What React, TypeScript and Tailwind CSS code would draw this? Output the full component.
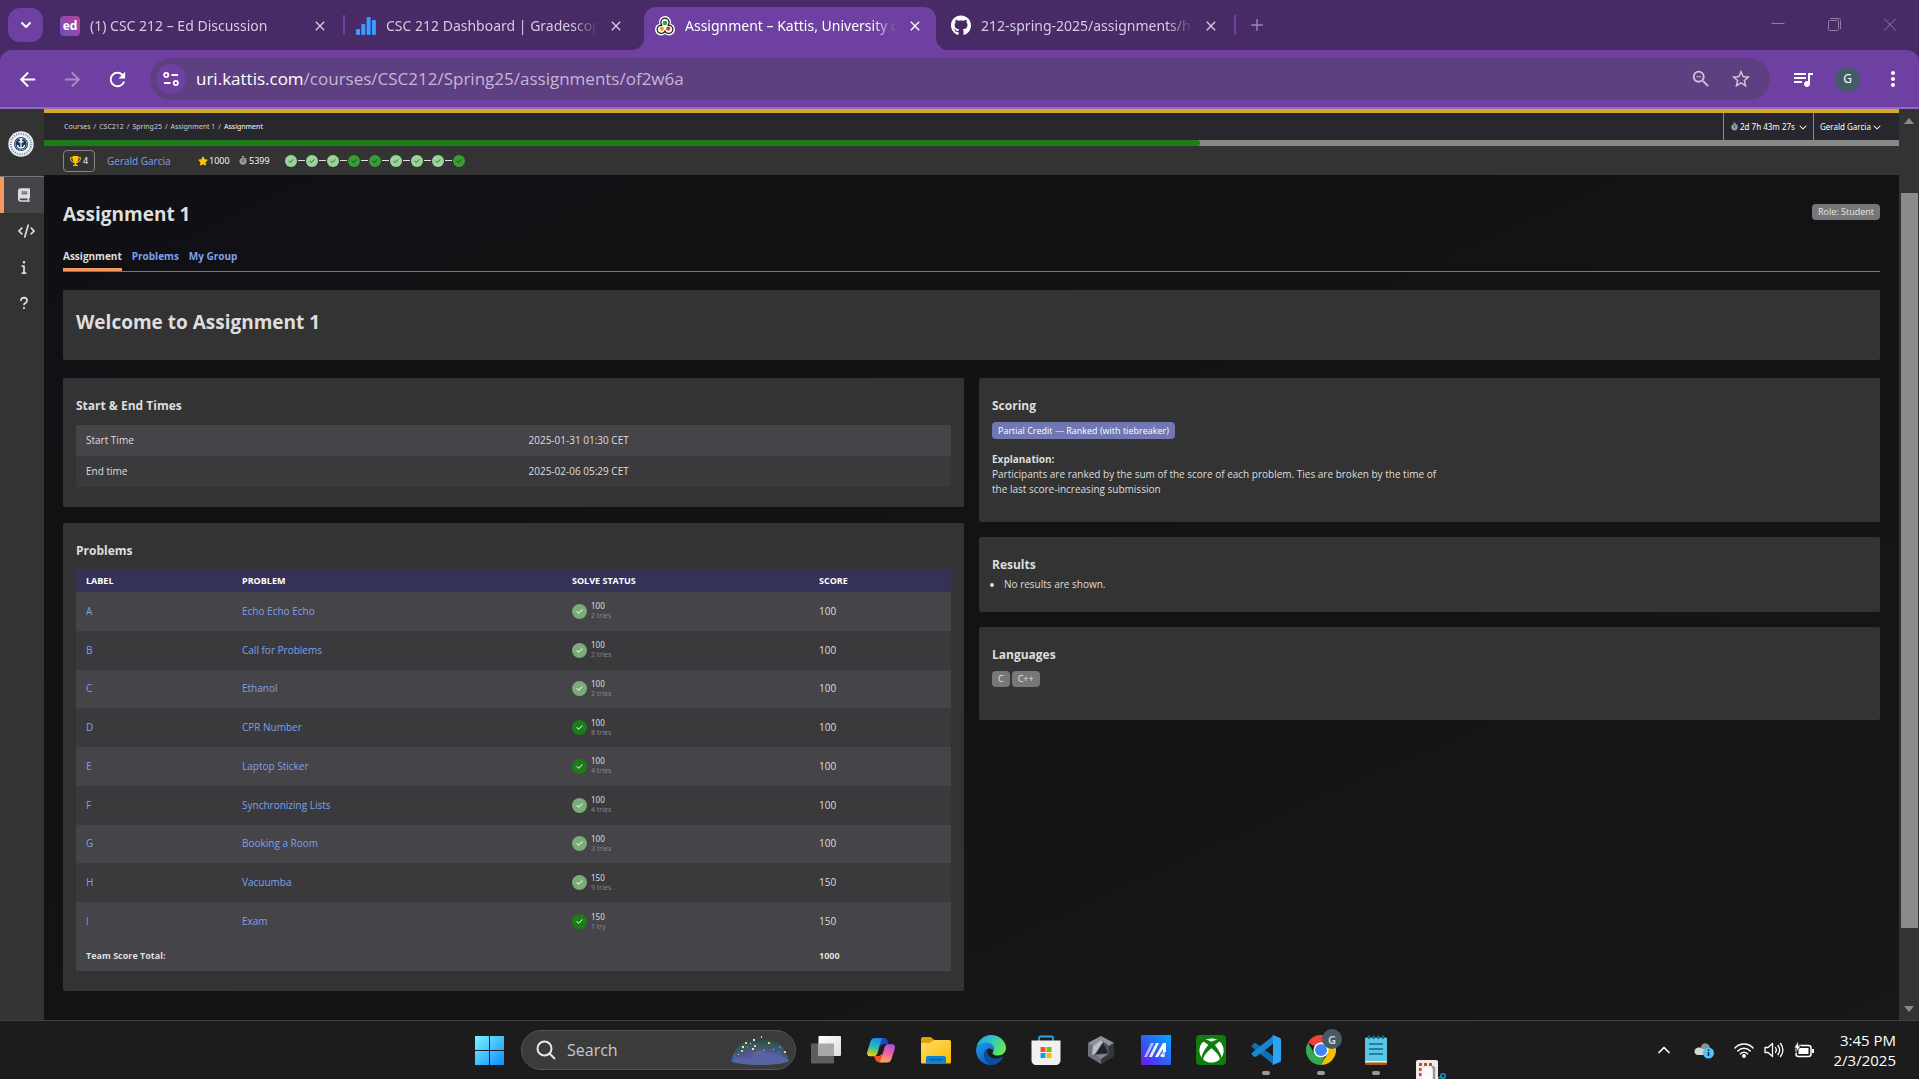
import React from "react";
import {
  FaBook,
  FaCheck,
  FaChevronDown,
  FaCode,
  FaGithub,
  FaInfo,
  FaQuestion,
  FaStar,
  FaStopwatch,
  FaTrophy,
  FaXbox,
} from "react-icons/fa6";
import {
  MdArrowBack,
  MdArrowForward,
  MdClose,
  MdMoreVert,
  MdQueueMusic,
  MdRefresh,
  MdStarBorder,
  MdZoomOut,
} from "react-icons/md";
import { ChevronDown, ChevronUp, Plus } from "lucide-react";

/* ---------- Browser chrome ---------- */

const EdIcon = () => (
  <span className="flex h-5 w-5 shrink-0 items-center justify-center rounded-sm bg-linear-to-tr from-[#6a4bc0] to-[#b6409b] font-['Open_Sans',sans-serif] text-xs font-bold text-white">
    ed
  </span>
);

const GradescopeIcon = () => (
  <svg viewBox="0 0 20 20" className="h-5 w-5 shrink-0 fill-[#3b9bff]">
    <rect x="0" y="13" width="4" height="6" rx="1" />
    <rect x="5.300" y="8" width="4" height="11" rx="1" />
    <rect x="10.600" y="1" width="4" height="18" rx="1" />
    <rect x="15.900" y="4" width="4" height="15" rx="1" />
  </svg>
);

const KattisIcon = () => (
  <svg viewBox="0 0 20 20" className="h-5 w-5 shrink-0">
    <g fill="#fff">
      <circle cx="10" cy="6" r="6" />
      <circle cx="6" cy="13.500" r="6" />
      <circle cx="14" cy="13.500" r="6" />
    </g>
    <g fill="#2b2b2b">
      <circle cx="10" cy="6.300" r="4.800" />
      <circle cx="6.300" cy="13.300" r="4.800" />
      <circle cx="13.700" cy="13.300" r="4.800" />
    </g>
    <g fill="#fff">
      <circle cx="10" cy="6.300" r="3.400" />
      <circle cx="6.300" cy="13.300" r="3.400" />
      <circle cx="13.700" cy="13.300" r="3.400" />
      <circle cx="10" cy="11" r="3" />
    </g>
    <circle cx="10" cy="7" r="2.200" fill="#2f9e44" />
    <circle cx="6.800" cy="12.600" r="2.200" fill="#f5a623" />
    <circle cx="13.200" cy="12.600" r="2.200" fill="#e0402f" />
  </svg>
);

type TabProps = {
  icon: React.ReactNode;
  title: string;
  active?: boolean;
};

function BrowserTab({ icon, title, active }: TabProps) {
  return (
    <div
      className={
        active
          ? "relative mt-[7px] flex h-[43px] w-[292px] items-center rounded-t-xl bg-[#6e40a1] pr-[13px] pb-1.5 pl-[11px] text-white"
          : "mt-[7px] flex h-[43px] w-[294px] items-center pr-[15px] pb-1.5 pl-[11px] text-[#d6cbe1]"
      }
    >
      {active && (
        <>
          <span className="absolute bottom-0 -left-3 h-3 w-3 bg-[radial-gradient(circle_at_0_0,transparent_12px,#6e40a1_12px)]" />
          <span className="absolute -right-3 bottom-0 h-3 w-3 bg-[radial-gradient(circle_at_100%_0,transparent_12px,#6e40a1_12px)]" />
        </>
      )}
      {icon}
      <span className="ml-2.5 flex-1 overflow-hidden [mask-image:linear-gradient(to_right,#000_88%,transparent)] text-[14px] leading-5 whitespace-nowrap">
        {title}
      </span>
      <button type="button" aria-label={"Close " + title} className="ml-2.5">
        <MdClose className="h-4 w-4" />
      </button>
    </div>
  );
}

const TabRule = () => <span className="mt-[15px] h-5 w-0.5 shrink-0 bg-[#6e40a1]" />;

function TabStrip() {
  return (
    <div className="flex h-[50px] shrink-0 bg-[#472a66]">
      <button
        type="button"
        aria-label="Search tabs"
        className="mt-2 ml-2 flex h-[34px] w-[35px] shrink-0 items-center justify-center rounded-xl bg-[#6e40a1] text-white"
      >
        <ChevronDown className="h-4 w-4" strokeWidth={3} />
      </button>
      <div className="ml-1.5 flex">
        <BrowserTab icon={<EdIcon />} title="(1) CSC 212 – Ed Discussion" />
        <TabRule />
        <BrowserTab icon={<GradescopeIcon />} title="CSC 212 Dashboard | Gradescop" />
        <div className="w-[5px]" />
        <BrowserTab icon={<KattisIcon />} title="Assignment – Kattis, University o" active />
        <div className="w-1" />
        <BrowserTab
          icon={<FaGithub className="h-[21px] w-5 shrink-0 text-white" />}
          title="212-spring-2025/assignments/h"
        />
        <TabRule />
        <button type="button" aria-label="New tab" className="ml-3 flex h-[50px] items-center text-[#9a86ad]">
          <Plus className="h-[18px] w-[18px]" />
        </button>
      </div>
      <div className="mt-[17px] mr-[21px] ml-auto flex gap-10 text-[#8f7da4]">
        <button type="button" aria-label="Minimize" className="h-4 w-4">
          <svg viewBox="0 0 16 16" className="h-4 w-4" stroke="currentColor" fill="none">
            <path d="M1.500 6.500h13" />
          </svg>
        </button>
        <button type="button" aria-label="Restore" className="h-4 w-4">
          <svg viewBox="0 0 16 16" className="h-4 w-4" stroke="currentColor" fill="none">
            <path d="M4 1.500h8.500a2 2 0 0 1 2 2V12" />
            <rect x="2.500" y="3.500" width="10" height="10" rx="1" />
          </svg>
        </button>
        <button type="button" aria-label="Close window" className="h-4 w-4">
          <svg viewBox="0 0 16 16" className="h-4 w-4" stroke="currentColor" fill="none">
            <path d="M2 1.500l12 12M14 1.500l-12 12" />
          </svg>
        </button>
      </div>
    </div>
  );
}

function Toolbar() {
  return (
    <div className="shrink-0 bg-[#472a66]">
      <div className="flex h-[59px] items-start rounded-t-xl border-b-2 border-[#9069bd] bg-[#6e40a1] pt-2 pr-3.5 text-white">
        <div className="flex h-[42px] items-center gap-[22px] pl-4">
          <button type="button" aria-label="Back">
            <MdArrowBack className="h-[23px] w-[23px]" />
          </button>
          <button type="button" aria-label="Forward" className="text-[#a68cc4]">
            <MdArrowForward className="h-[23px] w-[23px]" />
          </button>
          <button type="button" aria-label="Reload">
            <MdRefresh className="h-[23px] w-[23px]" />
          </button>
        </div>
        <div className="ml-[21px] flex h-[42px] flex-1 items-center rounded-full bg-[#5e3f81] pl-1.5">
          <button
            type="button"
            aria-label="View site information"
            className="flex h-[30px] w-[30px] items-center justify-center rounded-full bg-[#6e40a1]"
          >
            <svg viewBox="0 0 16 16" className="h-4 w-4" fill="none" stroke="#fff" strokeWidth="1.800">
              <circle cx="3.200" cy="4" r="2.100" />
              <path d="M8.500 4H15M1 12h6.500" />
              <circle cx="12.800" cy="12" r="2.100" />
            </svg>
          </button>
          <div className="ml-2.5 flex-1 font-['Open_Sans',sans-serif] text-[17px] leading-6 text-[#c6b6d6]">
            <span className="text-white">uri.kattis.com</span>/courses/CSC212/Spring25/assignments/of2w6a
          </div>
          <div className="flex items-center gap-[18px] pr-[18px] text-[#cfc5d8]">
            <button type="button" aria-label="Zoom">
              <MdZoomOut className="h-[22px] w-[22px]" />
            </button>
            <button type="button" aria-label="Bookmark this tab">
              <MdStarBorder className="h-[22px] w-[22px]" />
            </button>
          </div>
        </div>
        <div className="ml-[21px] flex h-[42px] items-center">
          <button type="button" aria-label="Media controls">
            <MdQueueMusic className="h-6 w-6" />
          </button>
          <button
            type="button"
            aria-label="Profile"
            className="ml-5 flex h-[25px] w-[25px] items-center justify-center rounded-full bg-[#455a64] text-xs text-white"
          >
            G
          </button>
          <button type="button" aria-label="Menu" className="ml-[21px]">
            <MdMoreVert className="h-6 w-6" />
          </button>
        </div>
      </div>
    </div>
  );
}

/* ---------- Site ---------- */

const Seal = () => (
  <svg viewBox="0 0 26 26" className="h-[26px] w-[26px]">
    <circle cx="13" cy="13" r="12.700" fill="#eef1f4" />
    <circle cx="13" cy="13" r="10.300" fill="none" stroke="#71839a" strokeWidth="2" strokeDasharray="1 1.400" />
    <circle cx="13" cy="13" r="7.800" fill="#fff" />
    <circle cx="13" cy="13" r="7" fill="#16355c" />
    <circle cx="13" cy="13" r="5.800" fill="none" stroke="#b8c4d2" strokeWidth="0.700" />
    <g fill="none" stroke="#fff" strokeWidth="1.200">
      <path d="M13 9v8M10.500 10.800h5M9.300 14c.5 2 2 3 3.700 3s3.200-1 3.700-3" />
      <circle cx="13" cy="8.600" r="0.900" />
    </g>
  </svg>
);

function Sidebar() {
  const item = "flex h-9 items-center pl-[18px] text-[#dcdcdc]";
  return (
    <nav aria-label="Main" className="w-11 shrink-0 bg-[#333333]">
      <div className="flex h-[68px] items-center border-b border-[#77777a] pt-[3px] pl-2">
        <Seal />
      </div>
      <a
        href="#courses"
        aria-label="Courses"
        className="flex h-9 items-center border-l-4 border-[#f8985f] bg-[#454449] pl-3.5 text-[#dcdcdc]"
      >
        <FaBook className="h-3.5 w-3" />
      </a>
      <a href="#code" aria-label="Code" className={item}>
        <FaCode className="h-3.5 w-[17px]" />
      </a>
      <a href="#info" aria-label="Information" className={item}>
        <FaInfo className="h-3.5 w-3" />
      </a>
      <a href="#help" aria-label="Help" className={item}>
        <FaQuestion className="h-3.5 w-3" />
      </a>
    </nav>
  );
}

const crumbs = ["Courses", "CSC212", "Spring25", "Assignment 1"];
const solved = [false, false, false, true, true, false, false, false, true];

function SiteHeader() {
  return (
    <header>
      <div className="flex h-[31px] border-t-4 border-[#d4a929] bg-[#28272d] font-['Noto_Sans',sans-serif] text-[8px] leading-3 text-[#e6e6e6]">
        <nav aria-label="Breadcrumb" className="flex items-center gap-[3px] pl-5 text-[7px] text-[#cfcfcf]">
          {crumbs.map((c) => (
            <React.Fragment key={c}>
              <a href="#crumb">{c}</a>
              <span>/</span>
            </React.Fragment>
          ))}
          <span className="text-white">Assignment</span>
        </nav>
        <button
          type="button"
          className="ml-auto flex w-[90px] items-center border-l border-[#8a8a8a] pl-[7px] whitespace-nowrap text-white"
        >
          <FaStopwatch className="mr-0.5 h-[9px] w-[7px] text-[#999]" />
          2d 7h 43m 27s
          <FaChevronDown className="mr-1.5 ml-auto h-2 w-2" />
        </button>
        <button
          type="button"
          className="flex w-[86px] items-center border-l border-[#8a8a8a] pl-1.5 whitespace-nowrap text-white"
        >
          Gerald Garcia
          <FaChevronDown className="mr-[18px] ml-auto h-2 w-2" />
        </button>
      </div>
      <div className="h-1.5 bg-[#888886]">
        <div className="h-1.5 w-[62.3%] rounded-r-sm bg-[#1b7c18]" />
      </div>
      <div className="flex h-[29px] items-center bg-[#333333] pl-[19px] text-[9px] leading-3 text-white">
        <span className="flex h-[22px] w-8 items-center justify-center gap-0.5 rounded-sm border border-[#858585]">
          <FaTrophy className="h-2.5 w-[11px] text-[#ffc400]" />4
        </span>
        <a href="#profile" className="ml-3 w-[61px] text-[10px] whitespace-nowrap text-[#7ba1ee]">
          Gerald Garcia
        </a>
        <span className="ml-[30px] flex w-[41px] items-center gap-px">
          <FaStar className="h-2.5 w-2.5 text-[#ffc400]" />
          1000
        </span>
        <span className="flex w-[46px] items-center gap-0.5">
          <FaStopwatch className="h-[9px] w-2 text-[#999]" />
          5399
        </span>
        <span className="flex items-center">
          {solved.map((first, i) => (
            <React.Fragment key={i}>
              {i > 0 && <span className="mx-px h-px w-[7px] bg-[#dddddd]" />}
              <span
                className={
                  first
                    ? "flex h-3 w-3 items-center justify-center rounded-full bg-[#379d34] text-[#1d4c1b]"
                    : "flex h-3 w-3 items-center justify-center rounded-full bg-[#9bd39a] text-[#2f6b2e]"
                }
              >
                <FaCheck className="h-1.5 w-1.5" />
              </span>
            </React.Fragment>
          ))}
        </span>
      </div>
    </header>
  );
}

const Card = ({ className = "", children }: { className?: string; children: React.ReactNode }) => (
  <section className={"rounded-xs bg-[#333333] px-[13px] pt-[18px] " + className}>{children}</section>
);

const CardTitle = ({ children }: { children: React.ReactNode }) => (
  <h3 className="text-[12px] leading-5 font-bold">{children}</h3>
);

const Tag = ({ children }: { children: React.ReactNode }) => (
  <span className="flex h-4 items-center rounded-sm bg-[#777777] px-1.5 text-[9px] leading-3 text-[#e6e6e6]">
    {children}
  </span>
);

const problems = [
  { label: "A", name: "Echo Echo Echo", score: 100, tries: "2 tries", first: false },
  { label: "B", name: "Call for Problems", score: 100, tries: "2 tries", first: false },
  { label: "C", name: "Ethanol", score: 100, tries: "2 tries", first: false },
  { label: "D", name: "CPR Number", score: 100, tries: "8 tries", first: true },
  { label: "E", name: "Laptop Sticker", score: 100, tries: "4 tries", first: true },
  { label: "F", name: "Synchronizing Lists", score: 100, tries: "4 tries", first: false },
  { label: "G", name: "Booking a Room", score: 100, tries: "3 tries", first: false },
  { label: "H", name: "Vacuumba", score: 150, tries: "9 tries", first: false },
  { label: "I", name: "Exam", score: 150, tries: "1 try", first: true },
];

function TimesTable() {
  return (
    <table className="mt-[9px] w-full table-fixed text-left">
      <tbody>
        <tr className="h-[31px] bg-[#454449]">
          <th className="pl-2.5 font-normal">Start Time</th>
          <td className="pl-[15px]">2025-01-31 01:30 CET</td>
        </tr>
        <tr className="h-[31px] bg-[#3a3a3c]">
          <th className="pl-2.5 font-normal">End time</th>
          <td className="pl-[15px]">2025-02-06 05:29 CET</td>
        </tr>
      </tbody>
    </table>
  );
}

function ProblemsTable() {
  return (
    <table className="mt-2 h-[402px] w-full table-fixed text-left">
      <colgroup>
        <col className="w-[156px]" />
        <col className="w-[330px]" />
        <col className="w-[247px]" />
        <col className="w-[142px]" />
      </colgroup>
      <thead>
        <tr className="h-[23px] bg-[#353258] text-[9px] text-white uppercase">
          <th className="pl-2.5">Label</th>
          <th className="pl-2.5">Problem</th>
          <th className="pl-2.5">Solve status</th>
          <th className="pl-2.5">Score</th>
        </tr>
      </thead>
      <tbody>
        {problems.map((p) => (
          <tr key={p.label} className="bg-[#3a3a3c] odd:bg-[#454449]">
            <td className="pl-2.5">
              <a href="#problem" className="text-[#7ba1ee]">
                {p.label}
              </a>
            </td>
            <td className="pl-2.5">
              <a href="#problem" className="text-[#7ba1ee]">
                {p.name}
              </a>
            </td>
            <td className="pl-2.5">
              <div className="flex items-center gap-1">
                <span
                  className={
                    p.first
                      ? "flex h-[15px] w-[15px] items-center justify-center rounded-full bg-[#1b7c18]"
                      : "flex h-[15px] w-[15px] items-center justify-center rounded-full bg-[#7bab79]"
                  }
                >
                  <FaCheck className="h-[7px] w-[7px] text-white" />
                </span>
                <span className="flex flex-col font-['Noto_Sans',sans-serif]">
                  <span className="text-[8px] leading-[10px]">{p.score}</span>
                  <span className="text-[7px] leading-[10px] text-[#858585]">{p.tries}</span>
                </span>
              </div>
            </td>
            <td className="pl-2.5">{p.score}</td>
          </tr>
        ))}
      </tbody>
      <tfoot>
        <tr className="h-[30px] bg-[#454449] text-[9px] font-bold">
          <td colSpan={3} className="pb-0.5 pl-2.5">
            Team Score Total:
          </td>
          <td className="pb-0.5 pl-2.5">1000</td>
        </tr>
      </tfoot>
    </table>
  );
}

function AssignmentPage() {
  return (
    <main className="flex-1 bg-linear-to-br from-[#101014] via-[#131315] to-[#171717] px-[19px] text-[10px] leading-[15px] text-[#dedede]">
      <div className="flex items-start justify-between pt-6">
        <h1 className="text-[19px] leading-[30px] font-bold">Assignment 1</h1>
        <div className="pt-[5px]">
          <Tag>Role: Student</Tag>
        </div>
      </div>
      <nav aria-label="Assignment" className="mt-5 flex gap-2.5 border-b border-[#77777a] text-[10px] font-bold">
        <a href="#assignment" className="border-b-3 border-[#f8985f] pb-1">
          Assignment
        </a>
        <a href="#problems" className="text-[#7ba1ee]">
          Problems
        </a>
        <a href="#group" className="text-[#7ba1ee]">
          My Group
        </a>
      </nav>
      <Card className="mt-[18px] h-[70px]">
        <h2 className="text-[19px] leading-7 font-bold">Welcome to Assignment 1</h2>
      </Card>
      <div className="mt-[18px] grid grid-cols-2 items-start gap-[15px]">
        <div className="flex flex-col gap-4">
          <Card className="pb-5">
            <CardTitle>Start &amp; End Times</CardTitle>
            <TimesTable />
          </Card>
          <Card className="pb-5">
            <CardTitle>Problems</CardTitle>
            <ProblemsTable />
          </Card>
        </div>
        <div className="flex flex-col gap-[15px]">
          <Card className="pb-[25px]">
            <CardTitle>Scoring</CardTitle>
            <div className="mt-1.5 flex">
              <span className="flex h-[17px] items-center rounded-sm bg-[#7077b3] px-1.5 text-[9px] text-white">
                Partial Credit — Ranked (with tiebreaker)
              </span>
            </div>
            <p className="mt-[13px] max-w-[450px]">
              <strong>Explanation:</strong>
              <br />
              Participants are ranked by the sum of the score of each problem. Ties are broken by the time of the
              last score-increasing submission
            </p>
          </Card>
          <Card className="pb-5">
            <CardTitle>Results</CardTitle>
            <ul className="mt-0.5 list-disc pl-3">
              <li>No results are shown.</li>
            </ul>
          </Card>
          <Card className="pb-[33px]">
            <CardTitle>Languages</CardTitle>
            <div className="mt-1.5 flex gap-0.5">
              <Tag>C</Tag>
              <Tag>C++</Tag>
            </div>
          </Card>
        </div>
      </div>
    </main>
  );
}

function Scrollbar() {
  return (
    <div aria-hidden="true" className="flex w-5 shrink-0 flex-col items-center bg-[#333333]">
      <svg viewBox="0 0 10 6" className="mt-[9px] h-1.5 w-2.5 fill-[#8b8b8b]">
        <path d="M5 0l5 6H0z" />
      </svg>
      <div className="mt-[69px] mb-[78px] w-[17px] flex-1 bg-[#8b8b8b]" />
      <svg viewBox="0 0 10 6" className="mb-2 h-1.5 w-2.5 fill-[#8b8b8b]">
        <path d="M5 6L0 0h10z" />
      </svg>
    </div>
  );
}

/* ---------- Windows taskbar ---------- */

const WindowsLogo = () => (
  <svg viewBox="0 0 29 29" className="h-[29px] w-[29px]">
    <defs>
      <linearGradient id="win" x1="0" y1="0" x2="1" y2="1">
        <stop offset="0" stopColor="#7df3ff" />
        <stop offset="1" stopColor="#0a8dff" />
      </linearGradient>
    </defs>
    <path fill="url(#win)" d="M0 0h14v14H0zM15 0h14v14H15zM0 15h14v14H0zM15 15h14v14H15z" />
  </svg>
);

const SearchArt = () => (
  <svg viewBox="0 0 60 32" className="h-8 w-[60px]">
    <defs>
      <radialGradient id="sky" cx="0.5" cy="1" r="0.9">
        <stop offset="0" stopColor="#6c62b8" />
        <stop offset="0.5" stopColor="#54558f" />
        <stop offset="0.8" stopColor="#35605f" stopOpacity="0.8" />
        <stop offset="1" stopColor="#2b6263" stopOpacity="0.1" />
      </radialGradient>
      <linearGradient id="hill" x1="0" y1="0" x2="0" y2="1">
        <stop offset="0" stopColor="#5a5fb0" />
        <stop offset="1" stopColor="#53679b" />
      </linearGradient>
    </defs>
    <path fill="url(#sky)" d="M1 27C5 12 16 2 30 2s25 10 29 25c-8 5-50 5-58 0z" />
    <path fill="#6d7a70" d="M22 20l8-4 8 4-8 3z" opacity="0.5" />
    <path fill="url(#hill)" d="M1 27c6-5 11-4 16-2 7-1 12-7 21-6 8 0 14 2 21 8-6 5-52 5-58 0z" />
    <g fill="#f2d544">
      <rect x="15" y="8" width="2" height="2" />
      <rect x="31" y="2" width="1" height="2" />
      <rect x="24" y="11" width="2" height="2" />
      <rect x="38" y="8" width="2" height="2" />
      <rect x="11" y="16" width="2" height="2" />
      <rect x="54" y="17" width="2" height="2" />
      <rect x="43" y="15" width="1" height="1" />
    </g>
    <g fill="#d6e4ff">
      <rect x="23" y="5" width="2" height="2" />
      <rect x="12" y="12" width="2" height="2" />
      <rect x="22" y="14" width="2" height="2" />
      <rect x="8" y="20" width="1" height="1" />
      <rect x="20" y="9" width="1" height="1" />
    </g>
    <g fill="#3f7ff0">
      <rect x="17" y="12" width="1" height="2" />
      <rect x="33" y="15" width="2" height="2" />
      <rect x="49" y="12" width="2" height="2" />
      <rect x="4" y="21" width="1" height="2" />
      <rect x="48" y="18" width="2" height="1" />
    </g>
  </svg>
);

const TaskView = () => (
  <svg viewBox="0 0 30 30" className="h-[30px] w-[30px]">
    <defs>
      <linearGradient id="tv" x1="0" y1="0" x2="1" y2="1">
        <stop offset="0" stopColor="#fff" />
        <stop offset="1" stopColor="#dcdcdc" />
      </linearGradient>
    </defs>
    <rect x="0" y="8.500" width="23" height="20" rx="1" fill="#5e5e5e" />
    <rect x="7.500" y="1" width="22.500" height="20" rx="1" fill="url(#tv)" />
    <rect x="7.500" y="8.500" width="15.500" height="12.500" fill="#a9a9a9" />
  </svg>
);

const Copilot = () => (
  <svg viewBox="0 0 30 30" className="h-[30px] w-[30px]">
    <defs>
      <linearGradient id="cpl" x1="0.5" y1="0" x2="0.3" y2="1">
        <stop offset="0" stopColor="#1a8cf0" />
        <stop offset="0.45" stopColor="#22b6c0" />
        <stop offset="0.75" stopColor="#8fcb45" />
        <stop offset="1" stopColor="#ffc81f" />
      </linearGradient>
      <linearGradient id="cpr" x1="0.7" y1="0" x2="0.4" y2="1">
        <stop offset="0" stopColor="#a855f0" />
        <stop offset="0.5" stopColor="#ef5fa0" />
        <stop offset="1" stopColor="#ffab55" />
      </linearGradient>
    </defs>
    <path fill="#1c48c8" d="M14 3h4c2 0 3 1 3.500 3l1 3h-4c-2 0-3 1-3.500 2.500L13 8z" />
    <path fill="#f0502a" d="M8 21h5c1 0 2-1 2.500-2.500L17 22l-1 3c-.5 1.500-1.500 2-3 2-2.500 0-3.500-1-4-3z" />
    <path fill="url(#cpl)" d="M8.500 3H18c-1.500 0-2.300 1-2.800 2.500L11.500 18c-.7 2.200-1.800 3.300-4 3.300H4c-2.500 0-3.500-2-2.700-4.600l3-9.700C5.200 4.200 6.500 3 8.500 3z" />
    <path fill="url(#cpr)" d="M21.500 27.500H12c1.500 0 2.300-1 2.800-2.500l3.700-12.500c.7-2.200 1.800-3.300 4-3.300H26c2.500 0 3.500 2 2.700 4.600l-3 9.700c-.9 2.800-2.200 4-4.200 4z" />
  </svg>
);

const Folder = () => (
  <svg viewBox="0 0 30 30" className="h-[30px] w-[30px]">
    <defs>
      <linearGradient id="fld" x1="0" y1="0" x2="1" y2="1">
        <stop offset="0" stopColor="#ffdd69" />
        <stop offset="1" stopColor="#fbb904" />
      </linearGradient>
    </defs>
    <path fill="#e2a008" d="M0 4c0-1 .7-2 2-2h7c2 0 3 3 5 3h14c1 0 2 1 2 2v3H0z" />
    <path fill="url(#fld)" d="M0 8h9l4-3h15c1 0 2 .8 2 2v20c0 1-.6 1.500-1.500 1.500h-27C.6 28.500 0 28 0 27z" />
    <path fill="#1280d0" d="M5 28.500V23c0-1.500 1-2 2-2h16c1.200 0 2 .7 2 2v5.500z" />
    <rect x="8" y="24" width="14" height="1.300" fill="#0b5a9e" />
  </svg>
);

const EdgeLogo = () => (
  <svg viewBox="0 0 30 30" className="h-[30px] w-[30px]">
    <defs>
      <linearGradient id="eda" x1="0" y1="0" x2="1" y2="0.4">
        <stop offset="0" stopColor="#1fa2e8" />
        <stop offset="0.5" stopColor="#2fc2c8" />
        <stop offset="1" stopColor="#63e45c" />
      </linearGradient>
      <linearGradient id="edb" x1="0" y1="0" x2="0.6" y2="1">
        <stop offset="0" stopColor="#1b9de8" />
        <stop offset="1" stopColor="#0f5fbf" />
      </linearGradient>
    </defs>
    <path fill="url(#eda)" d="M.5 12C2 5 8 0 15 0c8.500 0 15 6.200 15 13 0 4.500-3.500 7.500-8 7.500-3.500 0-5.500-1.200-5.500-2.600 0-1 1.300-1.500 1.300-3.900 0-3-3.300-6-8-6-4 0-7.500 1.800-9.300 4z" />
    <path fill="url(#edb)" d="M.3 13C2 9.500 6 7.500 10 7.500c4.800 0 7.800 3.300 7.800 6.300 0 .9-.3 1.700-.6 2.200-1-1.700-2.400-2.400-4-2.400-2.700 0-5 2.400-5 6 0 4.900 3.500 9 8.800 10.300-9.500.9-17-6-17-15z" />
    <path fill="#0c4e9e" d="M8.200 19.500c0-3.300 1.800-5.400 3.600-5.900-.5 1-.7 2-.7 3 0 4 4 7 8.400 7 2.500 0 4.700-.6 6.500-1.800.8-.4 1.400.2 1 .9C24.800 26.500 20.500 30 15.500 30c-4.200-1-7.300-5.500-7.300-10.500z" />
  </svg>
);

const StoreLogo = () => (
  <svg viewBox="0 0 30 30" className="h-[30px] w-[30px]">
    <path d="M8 7V3c0-1 .5-1.500 1.500-1.500h11c1 0 1.500.5 1.500 1.500v4" fill="none" stroke="#25a8e6" strokeWidth="1.800" />
    <path fill="#f1f1f1" d="M.5 5.500h29V25c0 3-2 5-5 5h-19c-3 0-5-2-5-5z" />
    <path fill="#f25022" d="M9.500 12h5v5h-5z" />
    <path fill="#7fba00" d="M15.500 12h5v5h-5z" />
    <path fill="#00a4ef" d="M9.500 18h5v5h-5z" />
    <path fill="#ffb900" d="M15.500 18h5v5h-5z" />
  </svg>
);

const ArmouryLogo = () => (
  <svg viewBox="0 0 30 30" className="h-[30px] w-[30px]">
    <path fill="#4a4f55" d="M15 1l13 7v13l-13 8L2 21V8z" />
    <path fill="#8d9398" d="M15 1L2 8l5 3 8-6 8 6 5-3z" />
    <path fill="#6d7379" d="M2 8l5 3v8l8 5v5L2 21z" />
    <path fill="#33373c" d="M28 8l-5 3v8l-8 5v5l13-8z" />
    <path fill="#b9bec3" d="M15 5l2 2-8 12-3 1 1-9z" />
    <path fill="#1f2327" d="M17 8l5 10-12 1z" />
    <path fill="#84898e" d="M9 20l13-1-7 5z" />
  </svg>
);

const MyAsusLogo = () => (
  <svg viewBox="0 0 30 30" className="h-[30px] w-[30px]">
    <defs>
      <linearGradient id="asus" x1="0" y1="1" x2="1" y2="0">
        <stop offset="0" stopColor="#6a16f5" />
        <stop offset="0.5" stopColor="#2f62f5" />
        <stop offset="1" stopColor="#06a5ff" />
      </linearGradient>
    </defs>
    <path fill="url(#asus)" d="M0 0h30v30H0z" />
    <g fill="#fff">
      <path d="M3 22l7-14h3L6 22z" opacity="0.6" />
      <path d="M8 22l7-14h3l-7 14z" opacity="0.9" />
      <path d="M14 22l8-14h3v9h-3v-3l-5 8z" />
      <path d="M21 22v-5h3v5z" opacity="0.6" />
      <circle cx="21" cy="20.500" r="1.500" />
    </g>
  </svg>
);

const XboxLogo = () => (
  <span className="flex h-[30px] w-[30px] items-center justify-center rounded-sm bg-[#107c10]">
    <FaXbox className="h-[25px] w-[25px] text-white" />
  </span>
);

const CodeLogo = () => (
  <svg viewBox="0 0 30 30" className="h-[30px] w-[30px]">
    <path fill="#0f70b5" d="M3 8.500L1 10.200c-.7.600-.7 1.500 0 2L22.500 29.500V21.500L5 8.300c-.6-.4-1.400-.3-2 .2z" />
    <path fill="#1a86d0" d="M3 21.500L1 19.800c-.7-.6-.7-1.500 0-2L22.500.5v8L5 21.700c-.6.400-1.400.3-2-.2z" />
    <path fill="#2ba5f3" d="M22.500.2L29 3c.6.300 1 .8 1 1.500v21c0 .7-.4 1.200-1 1.500l-6.500 2.800c-.7.300-1.500.2-2-.3.700.6 1.500.2 1.500-.7V1.200c0-.9-.8-1.300-1.500-.7.500-.5 1.300-.6 2-.3z" />
  </svg>
);

const ChromeLogo = () => (
  <span className="relative block h-[30px] w-[30px]">
    <svg viewBox="0 0 30 30" className="h-[30px] w-[30px]">
      <path fill="#ea4335" d="M15 15L2 7.500A15 15 0 0 1 28 7.500z" />
      <path fill="#fbbc04" d="M15 7.500h13A15 15 0 0 1 15 30l6.500-11.300z" />
      <path fill="#34a853" d="M2 7.500l6.500 11.300L15 22.500h4.300L15 30A15 15 0 0 1 2 7.500z" />
      <circle cx="15" cy="15" r="7.500" fill="#fff" />
      <circle cx="15" cy="15" r="6" fill="#4285f4" />
    </svg>
    <span className="absolute -top-[6px] -right-[6px] flex h-5 w-5 items-center justify-center rounded-full bg-[#455a64] text-[11px] leading-none font-semibold text-[#d9dfe2]">
      G
    </span>
  </span>
);

const NotepadLogo = () => (
  <svg viewBox="0 0 30 30" className="h-[30px] w-[30px]">
    <path fill="#a7560f" d="M4 26h22v3c0 .6-.4 1-1 1H5c-.6 0-1-.4-1-1z" />
    <path fill="#f0f0f0" d="M4 24h22v3.500H4z" />
    <path fill="#5cc6e2" d="M4 4c0-1 .5-1.500 1.500-1.500h19c1 0 1.500.5 1.500 1.500v22H4z" />
    <path stroke="#0b6e96" strokeWidth="1.600" d="M8 9h14M8 14h14M8 19h14" />
    <path stroke="#0b6e96" strokeWidth="2" d="M8 .5v3.500M12.700.5v3.500M17.300.5v3.500M22 .5v3.500" />
  </svg>
);

const SnipLogo = () => (
  <svg viewBox="0 0 30 19" className="h-[19px] w-[30px]">
    <path fill="#ececec" d="M0 2c0-1.300.7-2 2-2h18c1.300 0 2 .7 2 2v17H0z" />
    <rect x="6" y="7" width="11" height="12" fill="#fafafa" />
    <g fill="#d8431f">
      <path d="M3 3h3v3H3zM8 3h3v3H8zM13 3h3v3h-3zM3 8h2.500v3H3zM3 13h2.500v3H3z" />
    </g>
    <path fill="none" stroke="#9a9a9a" strokeWidth="2.500" d="M16 6.500l2 1.500v11" />
    <circle cx="27" cy="16" r="2.200" fill="none" stroke="#1c93d6" strokeWidth="1.500" />
    <path stroke="#1c93d6" strokeWidth="1.500" d="M22 18l3-1" />
  </svg>
);

const apps: { name: string; logo: React.ReactNode; running?: boolean }[] = [
  { name: "Task View", logo: <TaskView /> },
  { name: "Copilot", logo: <Copilot /> },
  { name: "File Explorer", logo: <Folder /> },
  { name: "Microsoft Edge", logo: <EdgeLogo /> },
  { name: "Microsoft Store", logo: <StoreLogo /> },
  { name: "Armoury Crate", logo: <ArmouryLogo /> },
  { name: "MyASUS", logo: <MyAsusLogo /> },
  { name: "Xbox", logo: <XboxLogo /> },
  { name: "Visual Studio Code", logo: <CodeLogo />, running: true },
  { name: "Google Chrome", logo: <ChromeLogo />, running: true },
  { name: "Notepad", logo: <NotepadLogo />, running: true },
];

function Taskbar() {
  return (
    <footer className="relative flex h-[59px] shrink-0 items-start justify-center border-t border-[#434343] bg-[#1c1c1c]">
      <div className="flex items-start pl-[2px]">
        <button type="button" aria-label="Start" className="pt-[15px]">
          <WindowsLogo />
        </button>
        <label className="mt-[9px] ml-[17px] flex h-10 w-[275px] items-center rounded-full border border-[#555555] bg-[#3b3b3b] pr-[5px] pl-3.5">
          <svg viewBox="0 0 20 20" className="h-5 w-5 shrink-0" fill="none" stroke="#e8e8e8" strokeWidth="2">
            <circle cx="8.500" cy="8.500" r="7" />
            <path d="M13.500 13.500l5 5" strokeLinecap="round" />
          </svg>
          <input
            type="text"
            placeholder="Search"
            aria-label="Search"
            className="ml-[11px] w-0 min-w-0 flex-1 bg-transparent font-['Open_Sans',sans-serif] text-[16px] leading-6 text-white outline-none placeholder:text-[#c8c8c8]"
          />
          <SearchArt />
        </label>
        <div className="ml-[15px] flex gap-[25px]">
          {apps.map((a) => (
            <button
              key={a.name}
              type="button"
              aria-label={a.name}
              className="flex h-[54px] w-[30px] flex-col items-center justify-between pt-3.5"
            >
              {a.logo}
              {a.running && <span className="h-1 w-2 rounded-full bg-[#9b9b9b]" />}
            </button>
          ))}
          <button type="button" aria-label="Snipping Tool" className="mt-[39px] h-[19px] w-[30px]">
            <SnipLogo />
          </button>
        </div>
      </div>
      <div className="absolute top-0 right-[23px] flex h-[58px] items-center text-white">
        <button type="button" aria-label="Show hidden icons">
          <ChevronUp className="h-5 w-5" />
        </button>
        <svg viewBox="0 0 20 18" className="ml-5 h-[18px] w-5">
          <path fill="#8f8f8f" d="M7 9c-1-5 3-8 6.500-6 2 1 2.700 2.800 2.500 5z" />
          <path fill="#d5d5d5" d="M4 14c-4 0-5-5.500-1-7 2-.8 4-.5 5 1 2-.5 4 .5 4 3l-1 3z" />
          <circle cx="14.500" cy="12" r="5.500" fill="#4cc2ff" />
          <path stroke="#10202b" strokeWidth="1.500" d="M14.500 11v4M14.500 8.500v1.500" />
        </svg>
        <svg
          viewBox="0 0 20 16"
          className="ml-5 h-4 w-5"
          fill="none"
          stroke="#fff"
          strokeWidth="1.500"
          strokeLinecap="round"
        >
          <path d="M1 6c5-5.300 13-5.300 18 0M3.800 9c3.500-3.600 8.900-3.600 12.400 0M6.500 11.800c2-2 5-2 7 0" />
          <circle cx="10" cy="14" r="1.200" fill="#fff" />
        </svg>
        <svg
          viewBox="0 0 20 18"
          className="ml-2.5 h-[18px] w-5"
          fill="none"
          stroke="#fff"
          strokeWidth="1.300"
          strokeLinejoin="round"
          strokeLinecap="round"
        >
          <path d="M1 6.500v5h3l4.500 4V2.500L4 6.500zM11.500 6.500c1 1.500 1 3.500 0 5M14 4.500c2 2.700 2 6.300 0 9M16.500 2.500c3 4 3 9 0 13" />
        </svg>
        <svg viewBox="0 0 20 18" className="ml-2.5 h-[18px] w-5">
          <rect x="2" y="4.500" width="15" height="11" rx="2.500" fill="none" stroke="#fff" strokeWidth="1.500" />
          <rect x="4.500" y="7" width="10" height="6" fill="#fff" />
          <path fill="#fff" d="M18 8h2v4h-2z" />
          <path fill="#fff" stroke="#1c1c1c" strokeWidth="0.800" d="M4 0L0 7h2.500L1.500 12 7 5H4.500z" />
        </svg>
        <div className="ml-5 w-[62px] text-right font-['Open_Sans',sans-serif] text-[15px] leading-5 whitespace-nowrap">
          <div>3:45 PM</div>
          <div className="flex justify-end">2/3/2025</div>
        </div>
      </div>
    </footer>
  );
}

export default function App() {
  return (
    <div className="flex h-screen flex-col overflow-hidden bg-[#151515] font-['Noto_Sans',sans-serif]">
      <TabStrip />
      <Toolbar />
      <div className="flex min-h-0 flex-1 overflow-hidden font-['Open_Sans',sans-serif]">
        <Sidebar />
        <div className="flex min-w-0 flex-1 flex-col">
          <SiteHeader />
          <AssignmentPage />
        </div>
        <Scrollbar />
      </div>
      <Taskbar />
    </div>
  );
}
